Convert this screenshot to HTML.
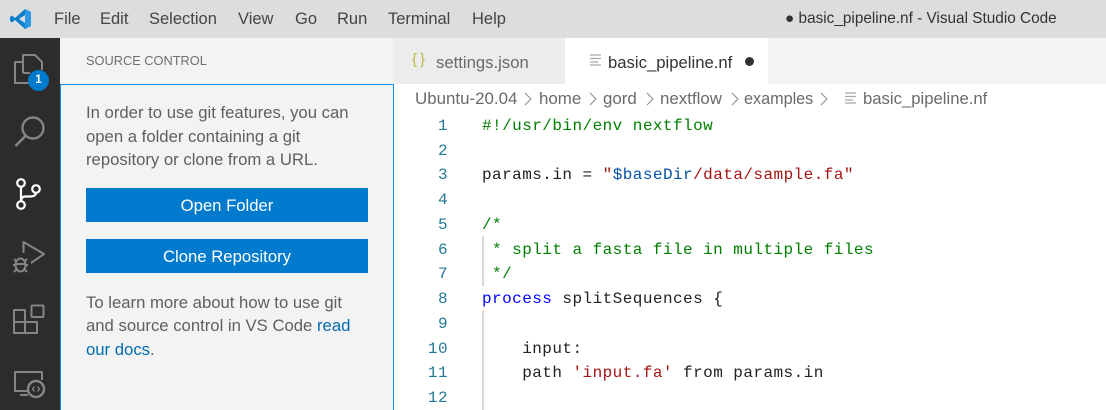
<!DOCTYPE html>
<html><head><meta charset="utf-8"><style>
html,body{margin:0;padding:0;width:1106px;height:410px;overflow:hidden;background:#fff}
body{position:relative;font-family:"Liberation Sans",sans-serif}
.a{position:absolute;white-space:pre}
.t{font-size:16.7px;line-height:20px;color:#5f5f5f}
.m{font-size:16.5px;line-height:20px;color:#444;top:9px}
.u{font-size:16.9px;line-height:20px;color:#6a6a6a;top:89px}
.c{position:absolute;left:482px;margin-top:1px;font-family:"Liberation Mono",monospace;font-size:16px;letter-spacing:.45px;line-height:24px;color:#222;white-space:pre}
.n{position:absolute;width:48px;left:400px;margin-top:1px;text-align:right;font-family:"Liberation Mono",monospace;font-size:16px;letter-spacing:.45px;line-height:24px;color:#237893}
.g{color:#008000}.r{color:#a31515}.b{color:#0000ff}.d{color:#0451a5}
.btn{position:absolute;left:86px;width:282px;height:34px;background:#007acc;color:#fff;font-size:16.7px;line-height:35px;text-align:center}
svg{position:absolute;overflow:visible}
</style></head><body>
<div class="a" style="left:0;top:0;width:1106px;height:38px;background:#dddddd"></div>
<svg style="left:10px;top:8px" width="22" height="22" viewBox="0 0 22 22">
<path d="M15 1 L21 4 V18 L15 21 L5 12 L2 14.5 L0 13 V9 L2 7.5 L5 10 Z M15 7 L9 11 L15 15 Z" fill="#0f7fcc" fill-rule="evenodd"/>
<path d="M15 1 L21 4 V18 L15 21 Z" fill="#2a9ae6"/>
</svg>
<div class="a m" style="left:54px">File</div>
<div class="a m" style="left:100px">Edit</div>
<div class="a m" style="left:149px">Selection</div>
<div class="a m" style="left:238px">View</div>
<div class="a m" style="left:295px">Go</div>
<div class="a m" style="left:337px">Run</div>
<div class="a m" style="left:388px">Terminal</div>
<div class="a m" style="left:472px">Help</div>
<div class="a m" style="left:785px;font-size:15.35px;color:#333">● basic_pipeline.nf - Visual Studio Code</div>

<div class="a" style="left:0;top:38px;width:60px;height:372px;background:#2c2c2c"></div>
<svg style="left:0;top:38px" width="60" height="372" viewBox="0 0 60 372" fill="none" stroke="#858585" stroke-width="2" stroke-linejoin="round">
<path d="M23 35 V17 H35 L42 24 V32 M23 35 H30"/><path d="M23 24 H15 V45 H30"/>
<circle cx="33" cy="90" r="10.5" stroke-width="2.4"/><path d="M25.5 98 L15.5 108" stroke-width="2.6"/>
<path d="M23.500 215 V204 L44 216 L31 225" stroke-width="2"/>
<ellipse cx="20.500" cy="227" rx="5" ry="6.500"/><path d="M14 221 L17 224 M27 221 L24 224 M13 227 H15.500 M25.500 227 H28 M14 234 L17 231 M27 234 L24 231 M15.500 226 H25.500"/>
<path d="M14 272 H25 V295 H14 Z M14 284 H37 V295 H25" stroke-width="2"/><rect x="31.500" y="267.500" width="12" height="11.500" rx="1" stroke-width="2"/>
<path d="M28 353 H15 V334 H42 V342 M20 357 H28"/><circle cx="36" cy="351" r="8" stroke-width="2.400"/><path d="M34.500 348.500 L32.500 351 L34.500 353.500 M37.500 348.500 L39.500 351 L37.500 353.500" stroke-width="1.300"/>
</svg>
<svg style="left:0;top:0" width="60" height="230" viewBox="0 0 60 230" fill="none" stroke="#fff" stroke-width="2.2">
<circle cx="21" cy="183" r="3.8"/><circle cx="21" cy="205" r="3.8"/><circle cx="36" cy="189" r="3.8"/>
<path d="M21 187 V201 M36 193 Q35.500 196.500 30 196.500 H25 Q21.500 196.500 21 201"/>
</svg>
<div class="a" style="left:28px;top:70px;width:21px;height:21px;border-radius:50%;background:#007acc;color:#fff;font-size:11.5px;font-weight:bold;line-height:21px;text-align:center">1</div>

<div class="a" style="left:60px;top:38px;width:334px;height:372px;background:#f3f3f3"></div>
<div class="a" style="left:60px;top:84px;width:332px;height:326px;border:1px solid #0a8fe8;border-bottom:0"></div>
<div class="a" style="left:86px;top:52px;font-size:12.8px;line-height:18px;color:#6f6f6f">SOURCE CONTROL</div>
<div class="a t" style="left:86px;top:103px">In order to use git features, you can</div>
<div class="a t" style="left:86px;top:127px">open a folder containing a git</div>
<div class="a t" style="left:86px;top:150px">repository or clone from a URL.</div>
<div class="btn" style="top:188px">Open Folder</div>
<div class="btn" style="top:239px">Clone Repository</div>
<div class="a t" style="left:86px;top:293px">To learn more about how to use git</div>
<div class="a t" style="left:86px;top:316px">and source control in VS Code <span style="color:#006ab1">read</span></div>
<div class="a t" style="left:86px;top:340px;color:#006ab1">our docs<span style="color:#5f5f5f">.</span></div>

<div class="a" style="left:394px;top:38px;width:712px;height:46px;background:#f3f3f3"></div>
<div class="a" style="left:394px;top:38px;width:171px;height:46px;background:#ececec"></div>
<div class="a" style="left:565px;top:38px;width:203px;height:46px;background:#fff"></div>
<div class="a" style="left:412px;top:51px;font-size:15px;line-height:18px;color:#b7b73b;letter-spacing:3px">{}</div>
<div class="a" style="left:436px;top:53px;font-size:16.7px;line-height:20px;color:#6a6a6a">settings.json</div>
<svg style="left:590px;top:54px" width="12" height="12" fill="none" stroke="#a8a8a8" stroke-width="1.3"><path d="M0 1H11M0 4.500H11M0 8H8M0 11H11"/></svg>
<div class="a" style="left:608px;top:53px;font-size:16.7px;line-height:20px;color:#333">basic_pipeline.nf</div>
<div class="a" style="left:745px;top:57px;width:9px;height:9px;border-radius:50%;background:#333"></div>

<div class="a u" style="left:415px">Ubuntu-20.04</div>
<div class="a u" style="left:539px">home</div>
<div class="a u" style="left:603px">gord</div>
<div class="a u" style="left:660px">nextflow</div>
<div class="a u" style="left:744px;font-size:16.2px">examples</div>
<svg style="left:400px;top:90px" width="450" height="18" fill="none" stroke="#8a8a8a" stroke-width="1"><path d="M125 3L131 9L125 15M190 3L196 9L190 15M247 3L253 9L247 15M332 3L338 9L332 15M421 3L427 9L421 15"/></svg>
<svg style="left:845px;top:92px" width="12" height="12" fill="none" stroke="#a8a8a8" stroke-width="1.3"><path d="M0 1H11M0 4.500H11M0 8H8M0 11H11"/></svg>
<div class="a u" style="left:863px;font-size:16.7px">basic_pipeline.nf</div>

<div class="n" style="top:113px">1</div>
<div class="n" style="top:138px">2</div>
<div class="n" style="top:162px">3</div>
<div class="n" style="top:187px">4</div>
<div class="n" style="top:212px">5</div>
<div class="n" style="top:237px">6</div>
<div class="n" style="top:261px">7</div>
<div class="n" style="top:286px">8</div>
<div class="n" style="top:311px">9</div>
<div class="n" style="top:336px">10</div>
<div class="n" style="top:360px">11</div>
<div class="n" style="top:385px">12</div>

<div class="a" style="left:482px;top:236px;width:2px;height:50px;background:#d8d8d8"></div>
<div class="a" style="left:482px;top:311px;width:2px;height:99px;background:#d8d8d8"></div>

<div class="c g" style="top:113px">#!/usr/bin/env nextflow</div>
<div class="c" style="top:162px">params.in = <span class="r">"</span><span class="d">$baseDir</span><span class="r">/data/sample.fa"</span></div>
<div class="c g" style="top:212px">/*</div>
<div class="c g" style="top:237px"> * split a fasta file in multiple files</div>
<div class="c g" style="top:261px"> */</div>
<div class="c" style="top:286px"><span class="b">process</span> splitSequences {</div>
<div class="c" style="top:336px">    input:</div>
<div class="c" style="top:360px">    path <span class="r">'input.fa'</span> from params.in</div>
</body></html>
